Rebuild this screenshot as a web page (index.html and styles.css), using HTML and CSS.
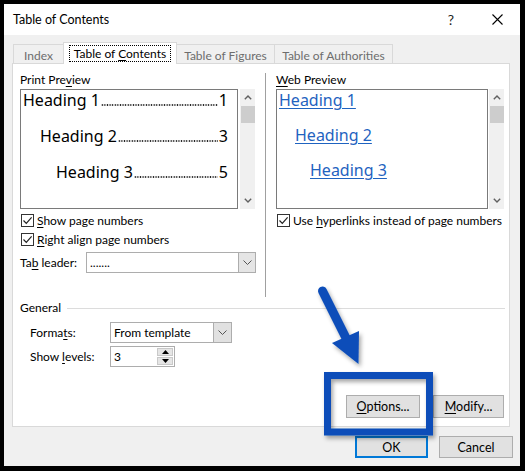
FILE: index.html
```html
<!DOCTYPE html>
<html lang="en">
<head>
  <meta charset="UTF-8">
  <title>Table of Contents</title>
  <link rel="stylesheet" href="styles.css">
</head>
<body>
  <div class="dialog">
    <div class="titlebar">
      <div class="title">Table of Contents</div>
      <div class="caption-btn help">?</div>
      <div class="caption-btn close">
        <svg width="11" height="11" viewBox="0 0 11 11"><path d="M0.5 0.5 L10.5 10.5 M10.5 0.5 L0.5 10.5" stroke="#000" stroke-width="1.1" fill="none"/></svg>
      </div>
    </div>

    <div class="tabstrip">
      <div class="tab tab-index">Index</div>
      <div class="tab active tab-toc"><span class="focus">Table of <u>C</u>ontents</span></div>
      <div class="tab tab-tof">Table of Figures</div>
      <div class="tab tab-toa">Table of Authorities</div>
    </div>

    <div class="panel">
      <div class="upper">
        <!-- print preview -->
        <div class="col col-left">
          <div class="label">Print Pre<u>v</u>iew</div>
          <div class="preview-row">
            <div class="preview print">
              <div class="toc-line lvl1"><span>Heading 1</span><span class="leader"></span><span>1</span></div>
              <div class="toc-line lvl2"><span>Heading 2</span><span class="leader"></span><span>3</span></div>
              <div class="toc-line lvl3"><span>Heading 3</span><span class="leader"></span><span>5</span></div>
            </div>
            <div class="scrollbar">
              <div class="sb-arrow"><svg width="8" height="5" viewBox="0 0 8 5"><path d="M0.8 4.2 L4 1 L7.2 4.2" stroke="#606060" stroke-width="1.4" fill="none"/></svg></div>
              <div class="sb-thumb"></div>
              <div class="sb-track"></div>
              <div class="sb-arrow"><svg width="8" height="5" viewBox="0 0 8 5"><path d="M0.8 0.8 L4 4 L7.2 0.8" stroke="#606060" stroke-width="1.4" fill="none"/></svg></div>
            </div>
          </div>
          <div class="check-row">
            <span class="checkbox"><svg width="11" height="11" viewBox="0 0 11 11"><path d="M1.5 5.5 L4.3 8.3 L9.6 2.4" stroke="#222" stroke-width="1.2" fill="none"/></svg></span>
            <span><u>S</u>how page numbers</span>
          </div>
          <div class="check-row">
            <span class="checkbox"><svg width="11" height="11" viewBox="0 0 11 11"><path d="M1.5 5.5 L4.3 8.3 L9.6 2.4" stroke="#222" stroke-width="1.2" fill="none"/></svg></span>
            <span><u>R</u>ight align page numbers</span>
          </div>
          <div class="field-row leader-row">
            <span class="field-label leader-label">Ta<u>b</u> leader:</span>
            <div class="combo leader-combo">
              <span class="combo-text">.......</span>
              <span class="combo-btn"><svg width="9" height="5" viewBox="0 0 9 5"><path d="M0.5 0.5 L4.5 4.5 L8.5 0.5" stroke="#555" stroke-width="1" fill="none"/></svg></span>
            </div>
          </div>
        </div>

        <div class="separator"></div>

        <!-- web preview -->
        <div class="col col-right">
          <div class="label"><u>W</u>eb Preview</div>
          <div class="preview-row web-row">
            <div class="preview web">
              <div class="web-line lvl1"><span class="link">Heading 1</span></div>
              <div class="web-line lvl2"><span class="link">Heading 2</span></div>
              <div class="web-line lvl3"><span class="link">Heading 3</span></div>
            </div>
            <div class="scrollbar">
              <div class="sb-arrow"><svg width="8" height="5" viewBox="0 0 8 5"><path d="M0.8 4.2 L4 1 L7.2 4.2" stroke="#606060" stroke-width="1.4" fill="none"/></svg></div>
              <div class="sb-thumb"></div>
              <div class="sb-track"></div>
              <div class="sb-arrow"><svg width="8" height="5" viewBox="0 0 8 5"><path d="M0.8 0.8 L4 4 L7.2 0.8" stroke="#606060" stroke-width="1.4" fill="none"/></svg></div>
            </div>
          </div>
          <div class="check-row web-check">
            <span class="checkbox"><svg width="11" height="11" viewBox="0 0 11 11"><path d="M1.5 5.5 L4.3 8.3 L9.6 2.4" stroke="#222" stroke-width="1.2" fill="none"/></svg></span>
            <span>Use <u>h</u>yperlinks instead of page numbers</span>
          </div>
        </div>
      </div>

      <div class="general">
        <span>General</span>
        <span class="general-line"></span>
      </div>

      <div class="field-row formats-row">
        <span class="field-label">Forma<u>t</u>s:</span>
        <div class="combo formats-combo">
          <span class="combo-text">From template</span>
          <span class="combo-btn"><svg width="9" height="5" viewBox="0 0 9 5"><path d="M0.5 0.5 L4.5 4.5 L8.5 0.5" stroke="#555" stroke-width="1" fill="none"/></svg></span>
        </div>
      </div>
      <div class="field-row levels-row">
        <span class="field-label">Show <u>l</u>evels:</span>
        <div class="spin">
          <span class="spin-text">3</span>
          <span class="spin-btns">
            <span class="spin-btn"><svg width="7" height="4" viewBox="0 0 7 4"><path d="M0 4 L3.5 0 L7 4 Z" fill="#000"/></svg></span>
            <span class="spin-btn"><svg width="7" height="4" viewBox="0 0 7 4"><path d="M0 0 L7 0 L3.5 4 Z" fill="#000"/></svg></span>
          </span>
        </div>
      </div>

      <div class="panel-buttons">
        <button class="btn btn-options"><u>O</u>ptions...</button>
        <button class="btn btn-modify"><u>M</u>odify...</button>
      </div>
    </div>

    <div class="footer">
      <button class="btn btn-ok">OK</button>
      <button class="btn btn-cancel">Cancel</button>
    </div>
  </div>

  <!-- callout drawn over the dialog -->
  <svg class="callout" width="525" height="471" viewBox="0 0 525 471">
    <defs>
      <filter id="shadow" x="-20%" y="-20%" width="140%" height="140%">
        <feDropShadow dx="2" dy="3" stdDeviation="2" flood-color="#000" flood-opacity="0.35"/>
      </filter>
    </defs>
    <g filter="url(#shadow)" fill="#0d4eb9" stroke="#0d4eb9">
      <path d="M322.5 291 L346 338" stroke-width="9" stroke-linecap="round" fill="none"/>
      <path d="M332 343 L359 331 L358.5 364 Z" stroke="none"/>
      <rect x="327.5" y="375.5" width="102" height="56.5" stroke-width="7" fill="none"/>
    </g>
  </svg>
</body>
</html>
```

FILE: styles.css
```css
body {
  margin: 0;
  width: 525px;
  height: 471px;
  background: #000;
  font-family: Lato, 'Noto Sans', sans-serif;
  font-size: 12px;
  color: #000;
  position: relative;
  overflow: hidden;
}

u { text-decoration-thickness: 1px; text-underline-offset: 2px; }

.dialog {
  margin: 4px 0 0 4px;
  width: 516px;
  height: 462px;
  background: #f0f0f0;
  display: flex;
  flex-direction: column;
}

/* title bar */
.titlebar {
  height: 31px;
  background: #fff;
  display: flex;
  align-items: center;
  padding-left: 9px;
  flex-shrink: 0;
}

.title { flex: 1; font-size: 12.5px; }

.caption-btn {
  width: 46px;
  height: 31px;
  display: flex;
  align-items: center;
  justify-content: center;
}

.help { font-size: 14px; color: #222; }

/* tabs */
.tabstrip {
  height: 28px;
  display: flex;
  align-items: flex-end;
  padding-left: 9px;
  flex-shrink: 0;
}

.tab {
  box-sizing: border-box;
  height: 19px;
  border: 1px solid #d9d9d9;
  border-bottom: none;
  background: #f0f0f0;
  color: #6d6d6d;
  display: flex;
  align-items: center;
  justify-content: center;
  padding-top: 2px;
  margin-left: -1px;
  white-space: nowrap;
}

.tab-index { width: 51px; margin-left: 0; }
.tab-toc { width: 114px; }
.tab-tof { width: 99px; }
.tab-toa { width: 119px; }

.tab.active {
  height: 22px;
  margin-bottom: -1px;
  background: #fff;
  color: #000;
  position: relative;
  z-index: 1;
  padding-top: 0;
}

.focus {
  outline: 1px dotted #000;
  padding: 0 4px;
  line-height: 15px;
}

/* panel */
.panel {
  box-sizing: border-box;
  margin-left: 8px;
  width: 498px;
  height: 364px;
  flex-shrink: 0;
  background: #fff;
  border: 1px solid #d9d9d9;
  padding: 8px 4px 0 7px;
}

.upper {
  display: flex;
  height: 228px;
}

.col-left { width: 236px; }
.col-right { width: 229px; }

.separator {
  width: 1px;
  background: #a0a0a0;
  margin: 1px 10px 3px 9px;
}

.label {
  height: 16px;
  line-height: 16px;
  margin-bottom: 1px;
}

.preview-row {
  display: flex;
  gap: 2px;
  height: 120px;
}

.web-row { gap: 1px; }

.preview {
  box-sizing: border-box;
  border: 1px solid #7a7a7a;
  height: 120px;
  font-family: 'Noto Sans', sans-serif;
  font-size: 16px;
  line-height: 20px;
  display: flex;
  flex-direction: column;
}

.preview.print {
  width: 218px;
  padding: 0 9px 0 2px;
  gap: 16px;
}

.preview.web {
  width: 212px;
  padding: 0 0 0 2px;
  gap: 15px;
}

.toc-line {
  display: flex;
  white-space: nowrap;
}

.toc-line.lvl2 { padding-left: 17px; }
.toc-line.lvl3 { padding-left: 33px; }

.leader {
  flex: 1;
  align-self: flex-end;
  height: 2px;
  margin: 0 1px 4px 1px;
  background-image: radial-gradient(circle, #222 0.75px, transparent 1.05px);
  background-size: 2.6px 2px;
  background-repeat: repeat-x;
}

.web-line.lvl2 { padding-left: 16px; }
.web-line.lvl3 { padding-left: 31px; }

.link {
  color: #1f63c0;
  text-decoration: underline;
  text-decoration-thickness: 1px;
  text-underline-offset: 2px;
}

.scrollbar {
  width: 15px;
  background: #f0f0f0;
  display: flex;
  flex-direction: column;
}

.sb-arrow {
  height: 17px;
  display: flex;
  align-items: center;
  justify-content: center;
}

.sb-thumb {
  height: 17px;
  margin: 0 0 0 1px;
  background: #cdcdcd;
}

.sb-track { flex: 1; }

.check-row {
  display: flex;
  align-items: center;
  height: 19px;
  padding-left: 1px;
  gap: 3px;
  white-space: nowrap;
}

.preview-row + .check-row { margin-top: 2px; }

.checkbox {
  box-sizing: border-box;
  width: 13px;
  height: 13px;
  border: 1px solid #333;
  background: #fff;
  display: flex;
  align-items: center;
  justify-content: center;
}

/* fields */
.field-row {
  display: flex;
  align-items: center;
}

.leader-row { margin-top: 3px; }

.leader-label { width: 66px; }

.combo {
  box-sizing: border-box;
  height: 21px;
  border: 1px solid #adadad;
  display: flex;
  background: #fff;
}

.combo-text {
  flex: 1;
  padding-left: 3px;
  line-height: 19px;
}

.combo-btn {
  width: 16px;
  background: #e5e5e5;
  border-left: 1px solid #adadad;
  display: flex;
  align-items: center;
  justify-content: center;
}

.leader-combo { width: 170px; }

.general {
  display: flex;
  align-items: center;
  height: 16px;
  line-height: 16px;
}

.general-line {
  flex: 1;
  height: 1px;
  background: #dcdcdc;
  margin-left: 6px;
}

.formats-row { margin-top: 6px; padding-left: 10px; }
.levels-row { margin-top: 3px; padding-left: 10px; }

.formats-row .field-label,
.levels-row .field-label { width: 80px; }

.formats-combo { width: 122px; }
.formats-combo .combo-btn { width: 17px; background: #e1e1e1; }

.spin {
  box-sizing: border-box;
  width: 65px;
  height: 21px;
  border: 1px solid #adadad;
  display: flex;
}

.spin-text {
  flex: 1;
  padding-left: 3px;
  line-height: 19px;
}

.spin-btns {
  width: 16px;
  display: flex;
  flex-direction: column;
  padding: 1px;
  gap: 1px;
}

.spin-btn {
  flex: 1;
  background: #e5e5e5;
  border: 1px solid #c9c9c9;
  display: flex;
  align-items: center;
  justify-content: center;
}

/* buttons */
.btn {
  box-sizing: border-box;
  height: 22px;
  background: #e1e1e1;
  border: 1px solid #adadad;
  font-family: inherit;
  font-size: 12.5px;
  color: #000;
  padding: 0;
}

.panel-buttons {
  display: flex;
  justify-content: flex-end;
  gap: 13px;
  margin-top: 28px;
  padding-right: 1px;
}

.btn-options { width: 74px; height: 23px; }
.btn-modify { width: 71px; height: 23px; }

.footer {
  display: flex;
  justify-content: flex-end;
  gap: 11px;
  padding: 9px 7px 0 0;
}

.btn-ok { width: 73px; border: 2px solid #0078d7; }
.btn-cancel { width: 74px; }

.callout {
  position: absolute;
  left: 0;
  top: 0;
  pointer-events: none;
}
```
